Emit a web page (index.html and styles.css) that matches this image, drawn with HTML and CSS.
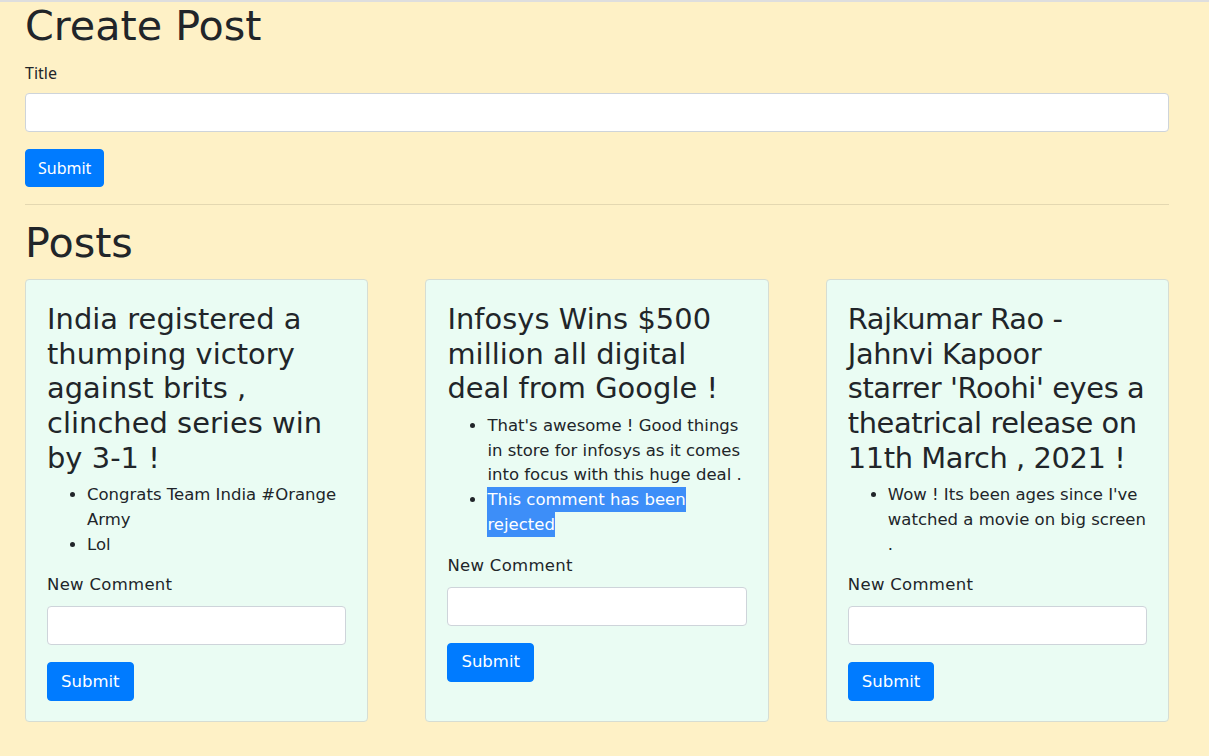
FILE: index.html
```html
<!DOCTYPE html>
<html lang="en">
<head>
<meta charset="utf-8">
<title>Posts</title>
<link rel="stylesheet" href="styles.css">
</head>
<body>
<div class="page">
  <h1 class="page-title">Create Post</h1>
  <form class="create-form">
    <label class="sys-label" for="title">Title</label>
    <input class="field" id="title" type="text">
    <button class="btn sys-btn" type="button">Submit</button>
  </form>
  <hr class="divider">
  <h1 class="page-title posts-title">Posts</h1>
  <div class="posts">
    <div class="card">
      <h3 class="card-title">India registered a thumping victory against brits , clinched series win by 3-1 !</h3>
      <ul class="comments">
        <li>Congrats Team India #Orange Army</li>
        <li>Lol</li>
      </ul>
      <label class="card-label">New Comment</label>
      <input class="field" type="text">
      <button class="btn" type="button">Submit</button>
    </div>
    <div class="card">
      <h3 class="card-title">Infosys Wins $500 million all digital deal from Google !</h3>
      <ul class="comments">
        <li>That's awesome ! Good things in store for infosys as it comes into focus with this huge deal .</li>
        <li><span class="selected">This comment has been rejected</span></li>
      </ul>
      <label class="card-label">New Comment</label>
      <input class="field" type="text">
      <button class="btn" type="button">Submit</button>
    </div>
    <div class="card">
      <h3 class="card-title card-title-tight">Rajkumar Rao - Jahnvi Kapoor<br>starrer 'Roohi' eyes a theatrical release on 11th March , 2021 !</h3>
      <ul class="comments">
        <li>Wow ! Its been ages since I've watched a movie on big screen .</li>
      </ul>
      <label class="card-label">New Comment</label>
      <input class="field" type="text">
      <button class="btn" type="button">Submit</button>
    </div>
  </div>
</div>
</body>
</html>
```

FILE: styles.css
```css
html {
  font-size: 16.5px;
}
body {
  margin: 0;
  background: #fef1c6;
  border-top: 2px solid #dedede;
  color: #212529;
  font-family: "DejaVu Sans", sans-serif;
  line-height: 1.5;
  min-height: 754px;
}
.page {
  padding: 0 40px 20px 25px;
}
.page-title {
  font-size: 2.5rem;
  font-weight: 400;
  line-height: 1.2;
  margin: 0 0 9px 0;
  letter-spacing: 0;
}
.create-form {
  display: flex;
  flex-direction: column;
  align-items: flex-start;
}
.sys-label {
  font-family: "Noto Sans", "Open Sans", sans-serif;
  font-size: 16px;
  line-height: 24px;
  margin-bottom: 8px;
}
.field {
  display: block;
  box-sizing: border-box;
  width: 100%;
  height: 39px;
  border: 1px solid #ced4da;
  border-radius: 4px;
  background: #fff;
  padding: 6px 12px;
  margin: 0;
  font: inherit;
}
.btn {
  box-sizing: border-box;
  border: 1px solid #007bff;
  background: #007bff;
  color: #fff;
  border-radius: 4px;
  font-family: inherit;
  font-size: 1rem;
  line-height: 1.5;
  padding: 6px 13px;
  height: 39px;
  margin-top: 17px;
  cursor: pointer;
}
.sys-btn {
  font-family: "Noto Sans", "Open Sans", sans-serif;
  font-size: 16px;
  height: 38px;
  padding: 6px 12px;
}
.divider {
  border: 0;
  border-top: 1px solid rgba(0, 0, 0, 0.1);
  margin: 17px 0 0 0;
}
.posts-title {
  margin: 14px 0 11px 0;
}
.posts {
  display: flex;
  justify-content: space-between;
  align-items: stretch;
}
.card {
  width: 30%;
  box-sizing: border-box;
  background: #eafcf3;
  border: 1px solid #d6ddd3;
  border-radius: 4px;
  padding: 22px 21px 20px 21px;
  display: flex;
  flex-direction: column;
  align-items: flex-start;
}
.card-title {
  font-size: 1.75rem;
  font-weight: 400;
  line-height: 1.2;
  margin: 0 0 8px 0;
  letter-spacing: 0.05px;
}
.card-title-tight {
  letter-spacing: -0.4px;
}
.comments {
  margin: 0 0 16px 0;
  padding-left: 40px;
  letter-spacing: 0;
}
.card-label {
  line-height: 24px;
  margin-bottom: 9px;
  letter-spacing: 0.3px;
}
.selected {
  background: #3d8ef8;
  color: #fff;
  padding: 3px 0;
}
```
